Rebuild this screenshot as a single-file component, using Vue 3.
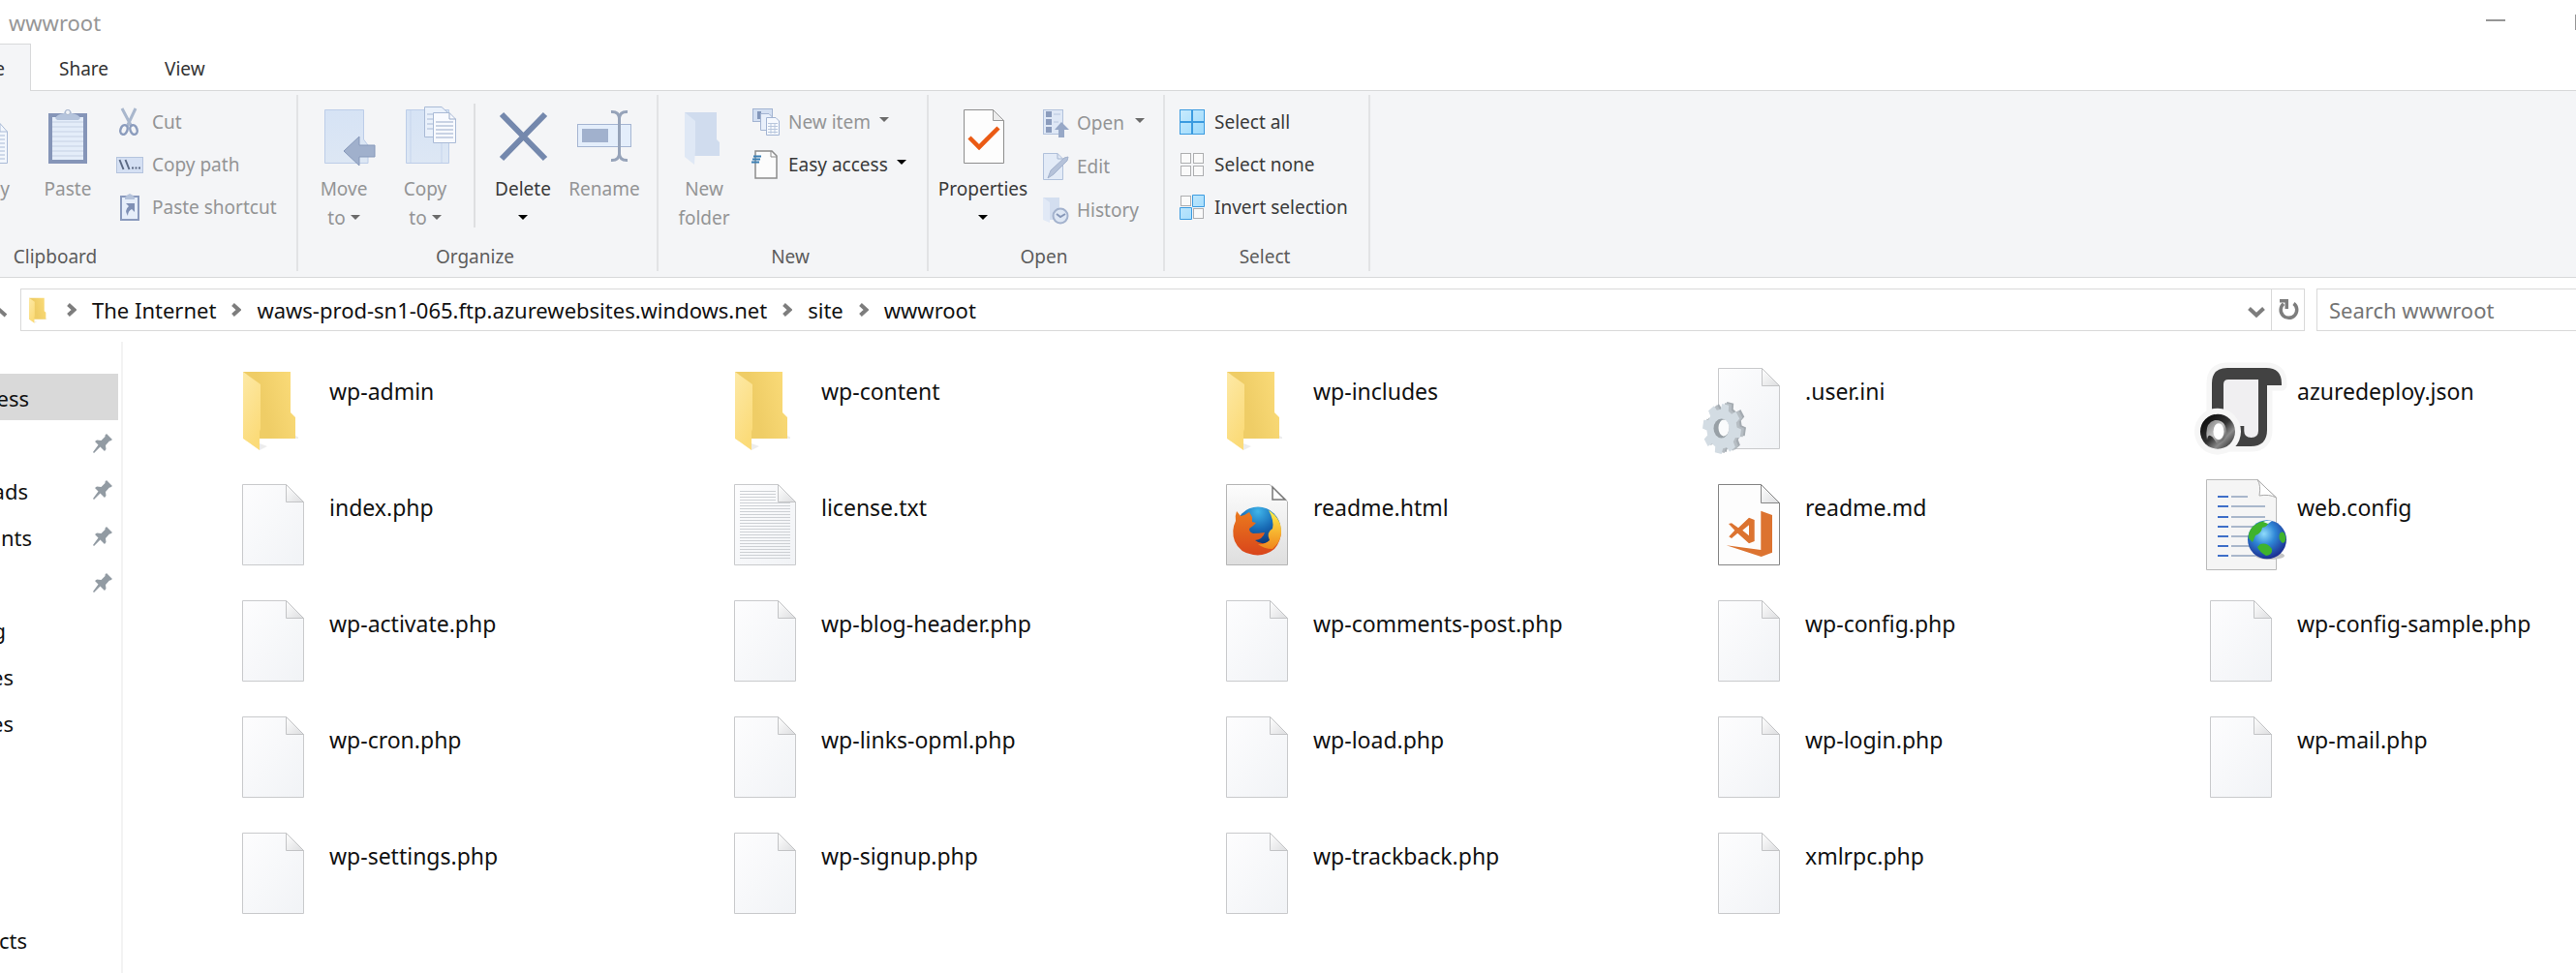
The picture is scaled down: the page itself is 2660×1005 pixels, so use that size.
<script setup>
const files = [
  ['folder', 'wp-admin'], ['folder', 'wp-content'], ['folder', 'wp-includes'], ['ini', '.user.ini'], ['json', 'azuredeploy.json'],
  ['sheet', 'index.php'], ['text', 'license.txt'], ['html', 'readme.html'], ['md', 'readme.md'], ['config', 'web.config'],
  ['sheet', 'wp-activate.php'], ['sheet', 'wp-blog-header.php'], ['sheet', 'wp-comments-post.php'], ['sheet', 'wp-config.php'], ['sheet', 'wp-config-sample.php'],
  ['sheet', 'wp-cron.php'], ['sheet', 'wp-links-opml.php'], ['sheet', 'wp-load.php'], ['sheet', 'wp-login.php'], ['sheet', 'wp-mail.php'],
  ['sheet', 'wp-settings.php'], ['sheet', 'wp-signup.php'], ['sheet', 'wp-trackback.php'], ['sheet', 'xmlrpc.php'],
].map(([icon, name]) => ({ icon, name }))

const places = [
  { text: 'ess', edge: 30, current: true },
  { text: '', edge: 0, pinned: true },
  { text: 'ads', edge: 29, pinned: true },
  { text: 'nts', edge: 33, pinned: true },
  { text: '', edge: 0, pinned: true },
  { text: 'g', edge: 6 },
  { text: 'es', edge: 14 },
  { text: 'es', edge: 14 },
]

const crumbs = ['The Internet', 'waws-prod-sn1-065.ftp.azurewebsites.windows.net', 'site', 'wwwroot']

const textLines = Array.from({ length: 24 }, (_, i) => 13 + i * 3)
const configLines = [19, 29, 40, 50, 60, 70, 80]

function gear(cx, cy) {
  const points = []
  for (let tooth = 0; tooth < 8; tooth++) {
    const steps = [[-16, 0.78], [-11, 1], [9, 1], [14, 0.78]]
    for (const [degrees, scale] of steps) {
      const angle = ((tooth * 45 + 12 + degrees) * Math.PI) / 180
      const x = cx + 20 * scale * Math.cos(angle)
      const y = cy + 26 * scale * Math.sin(angle)
      points.push(`${x.toFixed(1)},${y.toFixed(1)}`)
    }
  }
  return points.join(' ')
}
const gearBack = gear(25, 67)
const gearMid = gear(23, 68)
const gearFace = gear(20, 69)
</script>

<template>
  <div class="window">
    <svg class="defs" aria-hidden="true">
      <defs>
        <linearGradient id="paper" x1="0" y1="0" x2="1" y2="1">
          <stop offset="0" stop-color="#fdfdfe" /><stop offset="1" stop-color="#f1f3f6" />
        </linearGradient>
        <linearGradient id="fold" x1="0" y1="0" x2="1" y2="1">
          <stop offset="0" stop-color="#fff" /><stop offset="1" stop-color="#dcdddf" />
        </linearGradient>
        <linearGradient id="folderBack" x1="0" y1="0.3" x2="1" y2="0">
          <stop offset="0.3" stop-color="#efcd66" /><stop offset="1" stop-color="#fbdc7a" />
        </linearGradient>
        <linearGradient id="folderFront" x1="0" y1="0" x2="0.4" y2="1">
          <stop offset="0" stop-color="#fde9a6" /><stop offset="1" stop-color="#fbdb79" />
        </linearGradient>
        <linearGradient id="grayPage" x1="0" y1="0" x2="0" y2="1">
          <stop offset="0" stop-color="#fdfdfd" /><stop offset="1" stop-color="#dedede" />
        </linearGradient>
        <radialGradient id="foxGlobe" cx="0.5" cy="0.1" r="0.8">
          <stop offset="0" stop-color="#3fb5ea" /><stop offset="0.5" stop-color="#1769b4" /><stop offset="1" stop-color="#0b2a66" />
        </radialGradient>
        <linearGradient id="foxBody" x1="0" y1="0" x2="0" y2="1">
          <stop offset="0" stop-color="#ea7a1e" /><stop offset="1" stop-color="#d9451b" />
        </linearGradient>
        <linearGradient id="foxTail" x1="0" y1="0" x2="0" y2="1">
          <stop offset="0" stop-color="#fff04a" /><stop offset="1" stop-color="#f0861c" />
        </linearGradient>
        <radialGradient id="earth" cx="0.42" cy="0.35" r="0.65">
          <stop offset="0" stop-color="#8fdcfb" /><stop offset="0.45" stop-color="#2f86d6" /><stop offset="1" stop-color="#1b2f92" />
        </radialGradient>
        <linearGradient id="ringDark" x1="0" y1="0" x2="1" y2="1">
          <stop offset="0" stop-color="#000" /><stop offset="0.5" stop-color="#333" /><stop offset="0.7" stop-color="#8a8a8a" /><stop offset="1" stop-color="#111" />
        </linearGradient>
        <linearGradient id="ringLight" x1="0" y1="0" x2="1" y2="1">
          <stop offset="0" stop-color="#777" /><stop offset="0.5" stop-color="#c4c4c4" /><stop offset="1" stop-color="#444" />
        </linearGradient>
        <linearGradient id="tile" x1="0" y1="0" x2="1" y2="1">
          <stop offset="0" stop-color="#c9ebfd" /><stop offset="1" stop-color="#9bd9fc" />
        </linearGradient>
        <linearGradient id="paleBlue" x1="0" y1="0" x2="0" y2="1">
          <stop offset="0" stop-color="#d6e3f5" /><stop offset="1" stop-color="#dde7f4" />
        </linearGradient>
        <symbol id="page" viewBox="0 0 96 96">
          <path d="M16.500 6.500H61.500L79.500 24.500V89.500H16.500Z" fill="url(#paper)" stroke="#c9cacc" />
          <path d="M61.500 6.500V24.500H79.500Z" fill="url(#fold)" stroke="#c3c4c6" />
        </symbol>
        <symbol id="folder" viewBox="16 8 58 84">
          <path d="M34 79H77L71 76ZM34 91L42 87L34 84Z" fill="#ececec" />
          <path d="M17 10H66V52L71 57V79H17Z" fill="url(#folderBack)" />
          <path d="M17 10L35 23V69L34 72V91L17 79Z" fill="url(#folderFront)" />
        </symbol>
        <symbol id="pin" viewBox="0 0 20 20">
          <path d="M14 0L20 6L18 7.500L17 7.500L13 12L13.500 16L12 18L7.500 13.500L1 20L0 19L5.500 11.500L2 8L4 6.500L8.500 7L12.500 3V1.500Z" fill="#929ba3" />
        </symbol>
        <symbol id="down" viewBox="0 0 10 5"><path d="M0 0H10L5 5Z" fill="currentColor" /></symbol>
        <symbol id="right" viewBox="0 0 10 14"><path d="M1.500 1.500L7.500 7L1.500 12.500" fill="none" stroke="#7d7d7d" stroke-width="4" /></symbol>
        <symbol id="cell" viewBox="0 0 12 12"><rect x="0.500" y="0.500" width="10" height="10" fill="#fafafa" stroke="#adaeb0" /></symbol>
      </defs>
    </svg>

    <header class="titlebar">
      <h1 class="title">wwwroot</h1>
      <div class="caption-buttons">
        <button class="caption" aria-label="Minimize"><span class="minimize"></span></button>
        <button class="caption" aria-label="Maximize"><span class="maximize"></span></button>
      </div>
    </header>

    <nav class="tabs">
      <button class="tab active">e</button>
      <button class="tab">Share</button>
      <button class="tab">View</button>
    </nav>

    <section class="ribbon">
      <div class="group clipboard">
        <div class="tools">
          <button class="big cut-off" disabled>
            <svg class="big-icon" viewBox="0 0 60 60"><path d="M20 17.500H44L51.500 26V58.500H20Z" fill="#f3f7fd" stroke="#a9bad6" /><path d="M44 17.500V26H51.500M24 30H49M24 34H49M24 38H49M24 42H49M24 46H49M24 50H49M24 54H49" fill="none" stroke="#a9bad6" /></svg>
            <span>y</span>
          </button>
          <button class="big" disabled>
            <svg class="big-icon" viewBox="0 0 60 60">
              <rect x="12" y="9" width="36" height="48" fill="#e4edf9" stroke="#8595b8" stroke-width="4" />
              <path d="M14 16H46M14 21H46M14 26H46M14 31H46M14 36H46M14 41H46M14 46H46M14 51H46" stroke="#c5d1e4" />
              <path d="M17 12Q19 8 26 7Q27 3 30 3Q33 3 34 7Q41 8 43 12L41 14H19Z" fill="#b5c4dc" />
              <circle cx="30" cy="6" r="2.500" fill="#f1f4f8" stroke="#a9b6cc" />
            </svg>
            <span>Paste</span>
          </button>
          <div class="stack">
            <button class="small" disabled>
              <svg class="small-icon" viewBox="0 0 28 28"><path d="M6 0L16 19M20 0L11 19" stroke="#a9b7cd" stroke-width="3" /><ellipse cx="8" cy="22" rx="3.500" ry="5" fill="none" stroke="#8b9cbd" stroke-width="2.500" transform="rotate(20 8 22)" /><ellipse cx="18" cy="22" rx="3.500" ry="5" fill="none" stroke="#8b9cbd" stroke-width="2.500" transform="rotate(-20 18 22)" /></svg>
              Cut
            </button>
            <button class="small" disabled>
              <svg class="small-icon" viewBox="0 0 28 28"><rect x="0.500" y="6.500" width="27" height="16" fill="#d5e0f3" stroke="#b5c4de" /><path d="M3.500 9L7.500 19M9.500 9L13.500 19" stroke="#5c6a84" stroke-width="2" /><path d="M16 17.500H18M19.500 17.500H21.500M23 17.500H25" stroke="#5c6a84" stroke-width="2" /></svg>
              Copy path
            </button>
            <button class="small" disabled>
              <svg class="small-icon" viewBox="0 0 28 28"><rect x="5" y="3" width="18" height="24" fill="#e6eefa" stroke="#8a9abd" stroke-width="2" /><path d="M9 4Q11 1 14 0Q17 1 19 4V6H9Z" fill="#b5c3db" /><path d="M10 10H19V19L16 16Q12 18 12 23Q8 17 13 13Z" fill="#7f90b5" /></svg>
              Paste shortcut
            </button>
          </div>
        </div>
        <div class="group-name">Clipboard</div>
      </div>

      <div class="group organize">
        <div class="tools">
          <button class="big" disabled>
            <svg class="big-icon" viewBox="0 0 60 60"><path d="M10.500 3.500H50.500V34L55 40V58.500H10.500Z" fill="url(#paleBlue)" stroke="#bccde8" /><path d="M30 46L46 31V40H62V52H46V61Z" fill="#a0b0cc" stroke="#8799ba" /></svg>
            <span>Move<br>to <svg class="caret"><use href="#down" /></svg></span>
          </button>
          <button class="big" disabled>
            <svg class="big-icon" viewBox="0 0 60 60"><path d="M10.500 3.500H54.500V58.500H10.500Z" fill="url(#paleBlue)" stroke="#bccde8" /><path d="M15 4V58M47 36V58" stroke="#c6d5ec" /><path d="M29.500 0.500H47L53 6V31.500H29.500Z" fill="#eaf1fb" stroke="#a9bad6" /><path d="M32 8H38M32 13H38M32 18H38M32 23H38" stroke="#a9bad6" /><path d="M38.500 6.500H55L61.500 13V37.500H38.500Z" fill="#f8faff" stroke="#a9bad6" /><path d="M55 6.500V13H61.500M41 16H59M41 20H59M41 24H59M41 28H59M41 32H59" fill="none" stroke="#9aabc9" /></svg>
            <span>Copy<br>to <svg class="caret"><use href="#down" /></svg></span>
          </button>
          <span class="rule"></span>
          <button class="big">
            <svg class="big-icon" viewBox="0 0 60 60"><path d="M8 8L53 54M53 8L8 54" stroke="#7488ad" stroke-width="6" /></svg>
            <span>Delete<br><svg class="caret"><use href="#down" /></svg></span>
          </button>
          <button class="big" disabled>
            <svg class="big-icon" viewBox="0 0 60 60"><rect x="2.500" y="18.500" width="55" height="23" fill="#e4eefb" stroke="#a5b5d2" /><rect x="7" y="23" width="27" height="14" fill="#a1b1cd" /><path d="M37 5.500Q45 5 45.500 12V49Q45 56 37 55.500M54 5.500Q46 5 45.500 12M54 55.500Q46 56 45.500 49" fill="none" stroke="#96a3b9" stroke-width="3" /></svg>
            <span>Rename</span>
          </button>
        </div>
        <div class="group-name">Organize</div>
      </div>

      <div class="group new">
        <div class="tools">
          <button class="big" disabled>
            <svg class="big-icon" viewBox="0 0 60 60"><path d="M10 6H43V34L46 37V51H10Z" fill="#d0dcee" /><path d="M10 6L21 15V44L20 60L10 52Z" fill="#dfe8f5" /></svg>
            <span>New<br>folder</span>
          </button>
          <div class="stack">
            <button class="small" disabled>
              <svg class="small-icon" viewBox="0 0 28 28"><rect x="0.500" y="0.500" width="20" height="13" fill="#d3dff2" stroke="#a3b4d2" /><rect x="5" y="3" width="4" height="8" fill="#8296ba" /><path d="M8.500 5.500H17L21.500 10V22.500H8.500Z" fill="#e9f0fb" stroke="#a3b4d2" /><path d="M14.500 9.500H24L27.500 13V27.500H14.500Z" fill="#f6f9fe" stroke="#a3b4d2" /><path d="M16 15.500H26M16 18.500H26M16 21.500H26M16 24.500H26M19 15V26M23 15V26" stroke="#b9c7dd" /></svg>
              New item <svg class="caret"><use href="#down" /></svg>
            </button>
            <button class="small">
              <svg class="small-icon" viewBox="0 0 28 28"><path d="M3 0H20L25 5V28H3Z" fill="#fcfcfc" stroke="#8c8c8c" stroke-width="1.500" /><path d="M19 0V6H25" fill="none" stroke="#8c8c8c" /><path d="M1 5.500H9M0 8.500H8M-1 11.500H7" stroke="#3a7fb4" stroke-width="2" /></svg>
              Easy access <svg class="caret"><use href="#down" /></svg>
            </button>
          </div>
        </div>
        <div class="group-name">New</div>
      </div>

      <div class="group open">
        <div class="tools">
          <button class="big wide">
            <svg class="big-icon" viewBox="0 0 60 60"><path d="M10.500 3.500H40.500L51.500 14.500V58.500H10.500Z" fill="#fdfdfd" stroke="#8d8d8d" /><path d="M40.500 3.500V14.500H51.500Z" fill="#ececec" stroke="#9a9a9a" /><path d="M16 32L26 42L46 22" fill="none" stroke="#ea5a14" stroke-width="4.500" /></svg>
            <span>Properties<br><svg class="caret"><use href="#down" /></svg></span>
          </button>
          <div class="stack">
            <button class="small" disabled>
              <svg class="small-icon" viewBox="0 0 28 28"><rect x="0.500" y="0.500" width="20" height="25" fill="#dfe8f6" stroke="#b1c1db" /><path d="M3 2H9V8H3ZM3 10H9V16H3ZM3 18H9V24H3Z" fill="#8b9cbd" /><path d="M11 5H18M11 13H16" stroke="#b8c6de" /><path d="M19 13L27 21H22V29H16V21H12Z" fill="#97a8c7" /></svg>
              Open <svg class="caret far"><use href="#down" /></svg>
            </button>
            <button class="small" disabled>
              <svg class="small-icon" viewBox="0 0 28 28"><path d="M0.500 0.500H15L20.500 6V27.500H0.500Z" fill="#e3ebf7" stroke="#b1c1db" /><path d="M15 0.500V6H20.500" fill="none" stroke="#a3b3cf" /><path d="M5 26L8 18L22 5L26 4L25 8L11 22Z" fill="#b5c2d9" stroke="#a3b2cd" /></svg>
              Edit
            </button>
            <button class="small" disabled>
              <svg class="small-icon" viewBox="0 0 28 28"><path d="M0 1H17V24H0Z" fill="#d3deef" /><path d="M0 1L7 6V27L0 24Z" fill="#e1e9f6" /><circle cx="18" cy="20" r="7.500" fill="#dee7f4" stroke="#a3b2cd" stroke-width="2" /><path d="M14 18L18 21L23 18" fill="none" stroke="#8697b8" stroke-width="2" /></svg>
              History
            </button>
          </div>
        </div>
        <div class="group-name">Open</div>
      </div>

      <div class="group select">
        <div class="tools">
          <div class="stack">
            <button class="small">
              <svg class="small-icon" viewBox="0 0 28 28"><rect x="1.500" y="1.500" width="25" height="25" fill="url(#tile)" stroke="#3b9be0" /><path d="M14 1V27M1 14H27" stroke="#3b9be0" stroke-width="2" /></svg>
              Select all
            </button>
            <button class="small">
              <svg class="small-icon" viewBox="0 0 28 28"><use href="#cell" x="2" y="2" width="12" height="12" /><use href="#cell" x="15" y="2" width="12" height="12" /><use href="#cell" x="2" y="15" width="12" height="12" /><use href="#cell" x="15" y="15" width="12" height="12" /></svg>
              Select none
            </button>
            <button class="small">
              <svg class="small-icon" viewBox="0 0 28 28"><use href="#cell" x="2" y="2" width="12" height="12" /><use href="#cell" x="15" y="15" width="12" height="12" /><path d="M14.500 1.500H26.500V13.500H14.500ZM1.500 14.500H13.500V26.500H1.500Z" fill="url(#tile)" stroke="#3b9be0" /></svg>
              Invert selection
            </button>
          </div>
        </div>
        <div class="group-name">Select</div>
      </div>
    </section>

    <section class="location">
      <button class="up" aria-label="Up"><svg viewBox="0 0 8 12"><path d="M-3 1L6 9" stroke="#7d7d7d" stroke-width="4" /></svg></button>
      <div class="address">
        <svg class="address-icon"><use href="#folder" /></svg>
        <template v-for="crumb in crumbs" :key="crumb">
          <svg class="chevron"><use href="#right" /></svg>
          <a class="crumb" href="#">{{ crumb }}</a>
        </template>
        <button class="drop" aria-label="Previous locations"><svg viewBox="0 0 18 12"><path d="M1.500 1.500L9 8.500L16.500 1.500" fill="none" stroke="#7d7d7d" stroke-width="4" /></svg></button>
        <button class="refresh" aria-label="Refresh"><svg viewBox="0 0 20 22"><path d="M15.500 4.500A8.300 8.300 0 1 1 5 4.800" fill="none" stroke="#7d7d7d" stroke-width="3.500" /><path d="M1 0H10V10H6.500V3.500H1Z" fill="#7d7d7d" /></svg></button>
      </div>
      <input class="search" type="text" placeholder="Search wwwroot" aria-label="Search wwwroot">
    </section>

    <main class="body">
      <nav class="sidebar">
        <a v-for="(place, i) in places" :key="i" href="#" class="place" :class="{ current: place.current }">
          <span class="place-name" :style="{ width: place.edge + 'px' }">{{ place.text }}</span>
          <svg v-if="place.pinned" class="pin"><use href="#pin" /></svg>
        </a>
        <a href="#" class="place last"><span class="place-name" :style="{ width: '28px' }">cts</span></a>
      </nav>

      <ul class="files">
        <li v-for="file in files" :key="file.name" class="file">
          <svg class="file-icon" viewBox="0 0 96 96">
            <use v-if="file.icon === 'sheet' || file.icon === 'text' || file.icon === 'ini'" href="#page" width="96" height="96" />
            <use v-if="file.icon === 'folder'" href="#folder" x="16" y="8" width="58" height="84" />
            <g v-if="file.icon === 'text'" stroke="#cdd0d4">
              <path v-for="y in textLines" :key="y" :d="`M22 ${y + 0.5}H${y < 25 ? 59 : 74}`" />
            </g>
            <g v-if="file.icon === 'ini'">
              <polygon :points="gearBack" fill="#a4abb1" />
              <polygon :points="gearMid" fill="#b6bdc3" />
              <polygon :points="gearFace" fill="#d3dce3" />
              <ellipse cx="19.500" cy="68.500" rx="8" ry="10" fill="#98a0a6" />
              <ellipse cx="22" cy="68" rx="5.500" ry="8.500" fill="#fafbfc" />
            </g>
            <g v-if="file.icon === 'html'">
              <path d="M16.500 6.500H61L79.500 24V89.500H16.500Z" fill="url(#grayPage)" stroke="#b5b5b5" />
              <path d="M64 9V22H77Z" fill="#fff" stroke="#777" stroke-width="1.500" />
              <circle cx="49" cy="53" r="23.500" fill="url(#foxGlobe)" />
              <path d="M27 34L31 39Q36 38 40 35L43 40V45L47 46L44 49L40 52Q40 56 44 57Q50 57 56 56Q54 63 46 64Q53 70 61 65Q68 61 68 52L73 54Q73 65 66 73Q56 81 44 79Q30 77 25 65Q21 54 26 44Q25 39 27 34Z" fill="url(#foxBody)" />
              <path d="M60 33Q74 42 73 57Q72 66 64 73Q55 73 49 68Q56 69 61 64Q57 56 64 52Q66 44 60 33Z" fill="url(#foxTail)" />
            </g>
            <g v-if="file.icon === 'md'">
              <path d="M16.500 6.500H60.500L79.500 25.500V89.500H16.500Z" fill="#fdfdfd" stroke="#858585" />
              <path d="M60.500 6.500V25.500H79.500Z" fill="url(#fold)" stroke="#858585" />
              <path d="M60.300 33.700L72 38V76.700L60.700 81L24.700 69.300L60.300 74Z" fill="#dc7330" />
              <path d="M27 47L30 46.300L37 51.300L48 40.700L53.700 43V65L48 67.300L36.300 56.700L30 62L27.300 60.300L33.300 53.700ZM48 48.300L41.300 53.700L48 59.300Z" fill="#dc7330" fill-rule="evenodd" />
            </g>
            <g v-if="file.icon === 'json'">
              <path d="M18 71V22Q18 6 34 6H74Q90 6 90 22V24H75V70Q75 87 58 87H24Z" fill="#f6f6f6" stroke="#f6f6f6" stroke-width="11" stroke-linejoin="round" />
              <path d="M18 71V22Q18 6 34 6H74Q90 6 90 22V24H75V70Q75 87 58 87H24Z" fill="#424242" />
              <path d="M30 66V23Q30 18 35 18H66V71Q66 78 58.700 78Q51.300 78 51.300 71V66Z" fill="#f0eff1" />
              <circle cx="24" cy="71.700" r="24" fill="#f6f6f6" />
              <circle cx="24" cy="71.700" r="18" fill="url(#ringDark)" />
              <path d="M13 80Q10 63 21 60Q33 59 33 74Q31 83 23 84Q15 70 13 80Z" fill="url(#ringLight)" />
              <ellipse cx="25" cy="71.700" rx="5.500" ry="8.500" fill="#fff" />
            </g>
            <g v-if="file.icon === 'config'">
              <path d="M12.500 1.500H65L84.500 20V94.500H12.500Z" fill="#f5f5f5" stroke="#b9b9b9" />
              <path d="M65 1.500Q69 7 67 18Q77 16 84.500 20Z" fill="#fff" stroke="#aaa" />
              <path v-for="(y, i) in configLines" :key="'b' + y" :d="`M38 ${y}H${i ? 73 : 55}`" stroke="#a9b7cb" stroke-width="2" />
              <path v-for="y in configLines" :key="y" :d="`M24 ${y}H35`" stroke="#3f6fc8" stroke-width="2" />
              <ellipse cx="78" cy="80" rx="15" ry="4" fill="#c4c4c4" />
              <circle cx="75" cy="63.300" r="20" fill="url(#earth)" />
              <path d="M60 50Q68 43 77 44Q76 50 70 51Q69 57 63 59L60 66L56 62Q55 56 60 50ZM68 68Q75 66 80 73Q81 79 74 80Q67 76 65 71ZM88 57Q92 53 94 60Q95 66 91 67Q86 63 88 57Z" fill="#3fb32c" />
              <path d="M71 45Q75 43 80 44L76 47Z" fill="#e8f6fb" />
            </g>
          </svg>
          <span class="file-name">{{ file.name }}</span>
        </li>
      </ul>
    </main>
  </div>
</template>

<style>
body {
  background: #fff;
}
</style>

<style scoped>
.window {
  display: flex;
  flex-direction: column;
  min-height: 100vh;
  overflow: hidden;
  background: #fff;
  color: #111;
  font-family: "Noto Sans", "Open Sans", sans-serif;
  font-size: 22px;
  line-height: 30px;
}
.defs {
  position: absolute;
  width: 0;
  height: 0;
}
button {
  padding: 0;
  border: 0;
  background: none;
  color: inherit;
  font: inherit;
}
svg {
  overflow: visible;
}
a {
  color: inherit;
  text-decoration: none;
}

.titlebar {
  display: flex;
  justify-content: space-between;
  height: 45px;
}
.title {
  margin: 8px 0 0 9px;
  color: #969696;
  font-size: 22px;
  font-weight: 400;
}
.caption-buttons {
  display: flex;
  margin-right: -55px;
}
.caption {
  display: flex;
  justify-content: center;
  width: 92px;
  padding-top: 15px;
}
.minimize {
  width: 20px;
  height: 2px;
  margin-top: 5px;
  background: #969696;
}
.maximize {
  box-sizing: border-box;
  width: 20px;
  height: 16px;
  border: 2px solid #969696;
}

.tabs {
  display: flex;
  height: 49px;
  background: linear-gradient(#d8d9da, #d8d9da) bottom / 100% 1px no-repeat;
  color: #333;
  font-size: 19px;
}
.tab {
  padding: 3px 29px 0;
}
.tab.active {
  display: flex;
  justify-content: flex-end;
  align-items: center;
  box-sizing: border-box;
  width: 32px;
  padding: 2px 26px 0 0;
  border: solid #d8d9da;
  border-width: 1px 1px 0 0;
  background: #f4f5f7;
}

.ribbon {
  display: flex;
  height: 192px;
  border-bottom: 1px solid #d8d9da;
  background: #f4f5f7;
  color: #3a3a3a;
  font-size: 19px;
}
.group {
  display: flex;
  flex-direction: column;
  justify-content: space-between;
  box-sizing: border-box;
  height: 182px;
  margin-top: 4px;
  border-right: 2px solid #e2e3e5;
}
.clipboard { width: 308px; }
.organize { width: 372px; padding-left: 5px; }
.new { width: 279px; padding-left: 5px; }
.open { width: 244px; padding-left: 6px; }
.select { width: 212px; padding-left: 6px; }
.clipboard .tools { margin-left: -56px; }
.tools {
  display: flex;
}
.group-name {
  margin-right: 10px;
  color: #5c5c5c;
  text-align: center;
}
.clipboard .group-name { width: 114px; }
.big {
  display: flex;
  flex-direction: column;
  align-items: center;
  width: 84px;
  padding-top: 12px;
}
.big.wide {
  width: 100px;
}
.big.cut-off span {
  margin-left: 38px;
}
.big-icon {
  width: 60px;
  height: 60px;
  margin-bottom: 10px;
}
.big:disabled, .small:disabled {
  color: #939495;
}
.rule {
  width: 2px;
  height: 128px;
  margin: 9px 7px 0 8px;
  background: #dedfe1;
}
.stack {
  display: flex;
  flex-direction: column;
  padding: 6px 0 0 8px;
}
.small {
  display: flex;
  align-items: center;
  gap: 9px;
  height: 44px;
  white-space: nowrap;
}
.open .small {
  gap: 7px;
  height: 45px;
}
.open .stack {
  padding-left: 12px;
}
.small-icon {
  flex: none;
  width: 28px;
  height: 28px;
}
.caret {
  width: 10px;
  height: 5px;
  margin-bottom: 5px;
  color: #000;
}
:disabled .caret {
  color: #6b6b6b;
}
.open .caret.far {
  margin-left: 4px;
}

.location {
  display: flex;
  align-items: center;
  height: 66px;
}
.up {
  width: 21px;
  text-align: left;
}
.up svg {
  width: 8px;
  height: 12px;
}
.address {
  display: flex;
  flex: 1;
  align-items: center;
  box-sizing: border-box;
  height: 44px;
  margin-right: 12px;
  padding-left: 7px;
  border: 1px solid #d9d9d9;
}
.address-icon {
  width: 20px;
  height: 27px;
  margin-right: 4px;
}
.chevron {
  width: 10px;
  height: 14px;
  margin: 0 16px;
}
.crumb {
  white-space: nowrap;
}
.drop {
  width: 30px;
  margin-left: auto;
}
.drop svg {
  width: 18px;
  height: 12px;
}
.refresh {
  display: flex;
  justify-content: center;
  align-items: center;
  width: 34px;
  height: 100%;
  border-left: 1px solid #d9d9d9;
}
.refresh svg {
  width: 20px;
  height: 22px;
}
.search {
  box-sizing: border-box;
  width: 268px;
  height: 44px;
  padding: 0 0 0 12px;
  border: solid #d9d9d9;
  border-width: 1px 0 1px 1px;
  font: inherit;
}
.search::placeholder {
  color: #757575;
  opacity: 1;
}

.body {
  display: flex;
  flex: 1;
}
.sidebar {
  box-sizing: border-box;
  width: 127px;
  padding-top: 33px;
  border-right: 2px solid #f3f3f3;
}
.place {
  display: flex;
  justify-content: space-between;
  align-items: center;
  box-sizing: border-box;
  width: 122px;
  height: 48px;
  padding-right: 6px;
}
.place.current {
  background: #d9d9d9;
}
.place.last {
  margin-top: 176px;
}
.place-name {
  display: flex;
  justify-content: flex-end;
  margin-top: 2px;
  overflow: hidden;
}
.pin {
  width: 20px;
  height: 20px;
}
.files {
  display: grid;
  flex: 1;
  grid-template-columns: repeat(auto-fill, 360px);
  grid-auto-rows: 96px;
  gap: 24px 148px;
  margin: 0;
  padding: 21px 0 0 107px;
  font-size: 23px;
  list-style: none;
}
.file {
  display: flex;
  gap: 10px;
}
.file-icon {
  flex: none;
  width: 96px;
  height: 96px;
}
.file-name {
  margin-top: 15px;
  white-space: nowrap;
}
</style>
